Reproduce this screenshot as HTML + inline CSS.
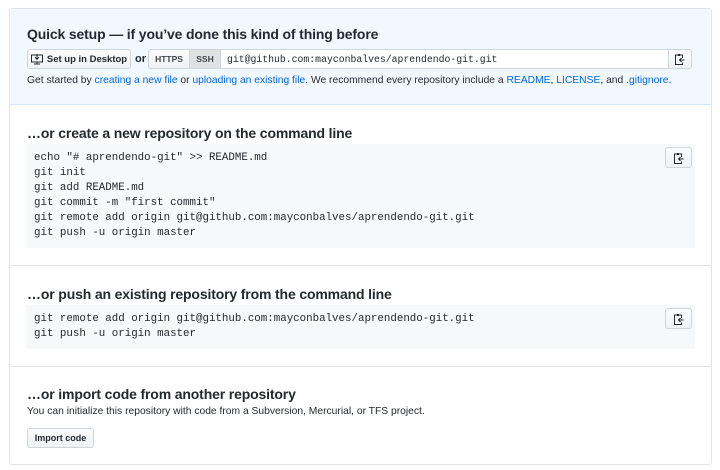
<!DOCTYPE html>
<html><head><meta charset="utf-8"><style>
*{box-sizing:border-box;margin:0;padding:0}
body{width:720px;height:470px;background:#fff;font-family:"Liberation Sans",sans-serif;color:#24292e;position:relative;overflow:hidden}
.box{position:absolute;left:9px;top:8px;width:703px;height:457px;border:1px solid #e1e4e8;border-radius:3px}
.top{position:absolute;left:10px;top:9px;width:701px;height:96px;background:#f1f8ff;border-bottom:1px solid #d8e6f5}
.a{position:absolute;white-space:nowrap}
h3{position:absolute;font-size:14px;font-weight:bold;white-space:nowrap;letter-spacing:-0.15px}
.t{font-size:10.3px}
a{color:#0366d6;text-decoration:none}
.btn{position:absolute;border:1px solid #d1d5da;border-radius:3px;background:linear-gradient(#fafbfc,#eff3f6);font-size:9.5px;font-weight:bold;display:flex;align-items:center;justify-content:center}
.code{position:absolute;left:26px;width:669px;background:#f6f8fa;font-family:"Liberation Mono",monospace;font-size:10.8px;line-height:15px;padding:7px 8px;white-space:pre}
.hr{position:absolute;left:10px;width:701px;height:1px;background:#e1e4e8}
</style></head><body>
<div class="box"></div>
<div class="top"></div>
<h3 style="left:27px;top:26px">Quick setup — if you’ve done this kind of thing before</h3>
<div class="btn" style="left:27px;top:49px;width:104px;height:20px"><svg width="12" height="11" viewBox="0 0 12 11" style="margin-right:4px"><rect x="0.5" y="1" width="11" height="7" fill="none" stroke="#24292e"/><path d="M6 0v5M4 3l2 2.5 2-2.5M3 10h6M6 8v2" stroke="#24292e" fill="none"/></svg>Set up in Desktop</div>
<div class="a t" style="left:135px;top:53px;font-weight:bold;font-size:11px">or</div>
<div class="btn" style="left:148px;top:49px;width:42px;height:20px;border-radius:3px 0 0 3px;font-size:8.5px;color:#444">HTTPS</div>
<div class="btn" style="left:189px;top:49px;width:32px;height:20px;border-radius:0;background:#dfe2e5;font-size:8.5px;color:#444">SSH</div>
<div class="a" style="left:220px;top:49px;width:449px;height:20px;border:1px solid #d1d5da;background:#fff;font-family:'Liberation Mono',monospace;font-size:9.8px;padding:4px 6px">git@github.com:mayconbalves/aprendendo-git.git</div>
<div class="btn" style="left:668px;top:49px;width:24px;height:20px;border-radius:0 3px 3px 0"><svg width="10" height="12" viewBox="0 0 10 12"><path d="M2 2h-1.5v9.5h7v-2M6 2h1.5v3" fill="none" stroke="#24292e"/><rect x="2.5" y="1" width="3" height="2" fill="#24292e"/><path d="M9.5 7h-5M6.5 5l-2 2 2 2" fill="none" stroke="#24292e"/></svg></div>
<div class="a t" style="left:27px;top:75px">Get started by <a>creating a new file</a> or <a>uploading an existing file</a>. We recommend every repository include a <a>README</a>, <a>LICENSE</a>, and <a>.gitignore</a>.</div>

<h3 style="left:27px;top:125px">…or create a new repository on the command line</h3>
<div class="code" style="top:144px;height:104px">echo "# aprendendo-git" &gt;&gt; README.md
git init
git add README.md
git commit -m "first commit"
git remote add origin git@github.com:mayconbalves/aprendendo-git.git
git push -u origin master</div>
<div class="btn" style="left:665px;top:147px;width:27px;height:21px"><svg width="10" height="12" viewBox="0 0 10 12"><path d="M2 2h-1.5v9.5h7v-2M6 2h1.5v3" fill="none" stroke="#24292e"/><rect x="2.5" y="1" width="3" height="2" fill="#24292e"/><path d="M9.5 7h-5M6.5 5l-2 2 2 2" fill="none" stroke="#24292e"/></svg></div>
<div class="hr" style="top:265px"></div>

<h3 style="left:27px;top:286px">…or push an existing repository from the command line</h3>
<div class="code" style="top:305px;height:44px">git remote add origin git@github.com:mayconbalves/aprendendo-git.git
git push -u origin master</div>
<div class="btn" style="left:665px;top:308px;width:27px;height:21px"><svg width="10" height="12" viewBox="0 0 10 12"><path d="M2 2h-1.5v9.5h7v-2M6 2h1.5v3" fill="none" stroke="#24292e"/><rect x="2.5" y="1" width="3" height="2" fill="#24292e"/><path d="M9.5 7h-5M6.5 5l-2 2 2 2" fill="none" stroke="#24292e"/></svg></div>
<div class="hr" style="top:366px"></div>

<h3 style="left:27px;top:386px">…or import code from another repository</h3>
<div class="a t" style="left:27px;top:406px">You can initialize this repository with code from a Subversion, Mercurial, or TFS project.</div>
<div class="btn" style="left:27px;top:428px;width:67px;height:20px;font-size:9px">Import code</div>
</body></html>
